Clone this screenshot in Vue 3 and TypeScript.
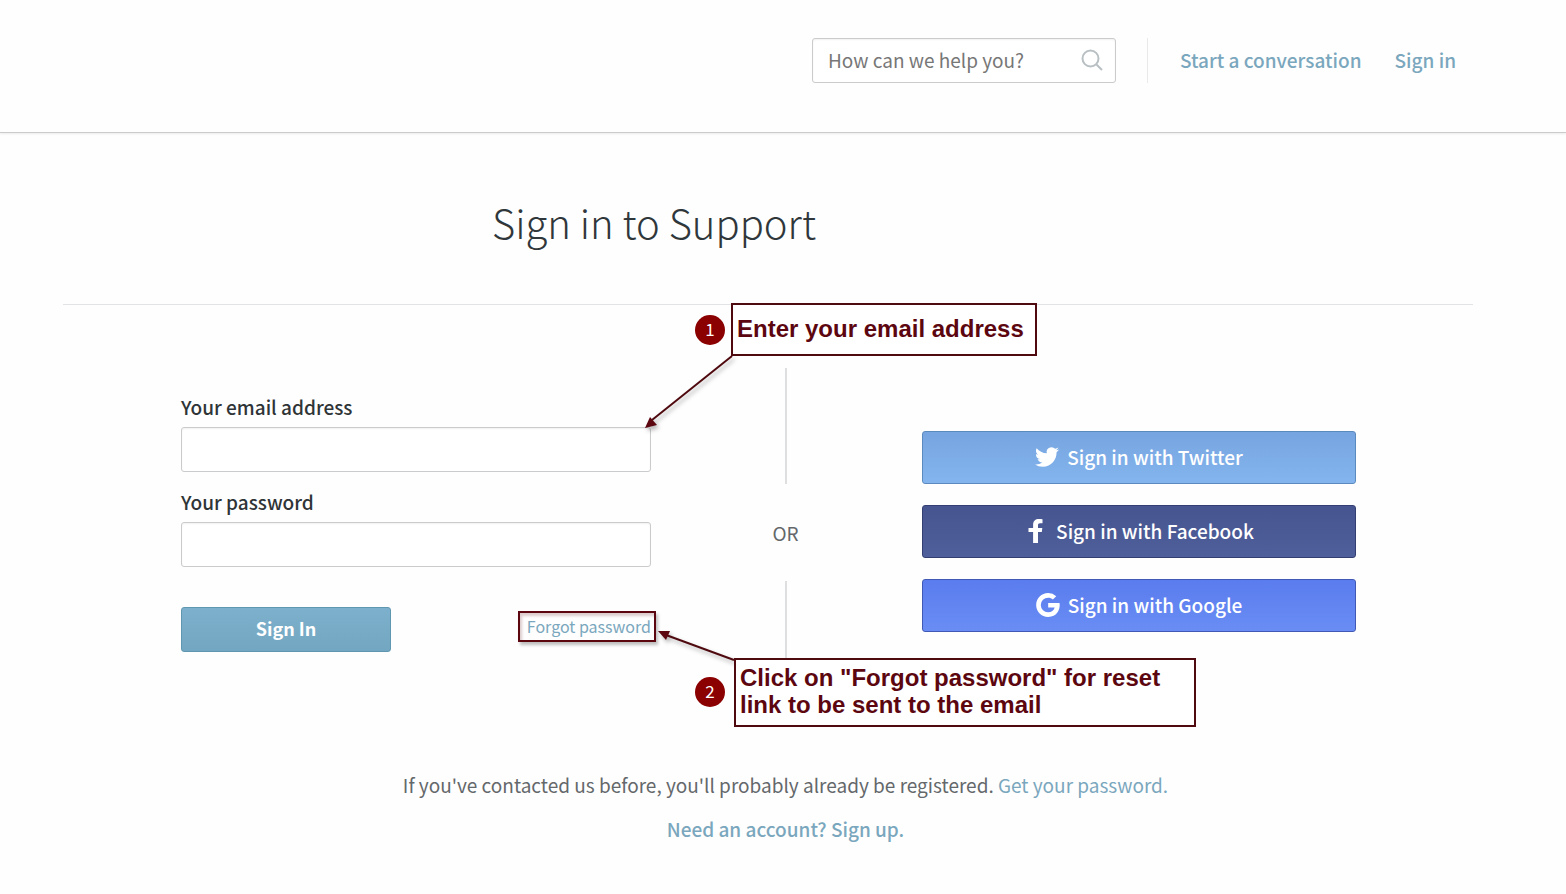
<script setup lang="ts">
import { ref } from 'vue'

interface Provider {
  id: string
  name: string
  viewBox: string
  path: string
}

const query = ref('')
const email = ref('')
const password = ref('')

const providers: Provider[] = [
  {
    id: 'twitter',
    name: 'Twitter',
    viewBox: '0 0 24 24',
    path: 'M23.953 4.57a10 10 0 01-2.825.775 4.958 4.958 0 002.163-2.723c-.951.555-2.005.959-3.127 1.184a4.92 4.92 0 00-8.384 4.482C7.69 8.095 4.067 6.13 1.64 3.162a4.822 4.822 0 00-.666 2.475c0 1.71.87 3.213 2.188 4.096a4.904 4.904 0 01-2.228-.616v.06a4.923 4.923 0 003.946 4.827 4.996 4.996 0 01-2.212.085 4.936 4.936 0 004.604 3.417 9.867 9.867 0 01-6.102 2.105c-.39 0-.779-.023-1.17-.067a13.995 13.995 0 007.557 2.209c9.053 0 13.998-7.496 13.998-13.985 0-.21 0-.42-.015-.63A9.935 9.935 0 0024 4.59z',
  },
  {
    id: 'facebook',
    name: 'Facebook',
    viewBox: '0 0 24 24',
    path: 'M18.5.2v4h-2.300c-1.800 0-2.200.9-2.200 2.100v2.600h4.300l-.5 4H14V24H9.100V12.900H4.500v-4h4.600V5.700C9.100 2 11.400 0 14.900 0c1.700 0 3.100.1 3.600.2z',
  },
  {
    id: 'google',
    name: 'Google',
    viewBox: '2.400 2 20 20',
    path: 'M12.545 10.239v3.821h5.445c-.712 2.315-2.647 3.972-5.445 3.972a6.033 6.033 0 1 1 0-12.064c1.498 0 2.866.549 3.921 1.453l2.814-2.814A9.969 9.969 0 0 0 12.545 2C7.021 2 2.543 6.477 2.543 12s4.478 10 10.002 10c8.396 0 10.249-7.85 9.426-11.748l-9.426-.013z',
  },
]
</script>

<template>
  <div class="page">
    <header class="topbar">
      <form class="search" role="search" @submit.prevent>
        <input v-model="query" type="text" placeholder="How can we help you?" aria-label="Search" />
        <button type="submit" aria-label="Submit search">
          <svg viewBox="0 0 22 22" width="22" height="22" fill="none" stroke="#b9c0c3" stroke-width="2">
            <circle cx="9.500" cy="9.500" r="8" />
            <path d="M15.200 15.200L21 21" />
          </svg>
        </button>
      </form>
      <nav class="links">
        <a href="#conversation">Start a conversation</a>
        <a href="#signin">Sign in</a>
      </nav>
    </header>

    <main>
      <h1>Sign in to Support</h1>
      <section class="panel">
        <form class="login" @submit.prevent>
          <label for="email">Your email address</label>
          <input id="email" v-model="email" type="email" />
          <label for="password">Your password</label>
          <input id="password" v-model="password" type="password" />
          <div class="actions">
            <button type="submit">Sign In</button>
            <a href="#forgot">Forgot password</a>
          </div>
        </form>
        <div class="divider"><span>OR</span></div>
        <div class="social">
          <button v-for="p in providers" :key="p.id" type="button" :class="p.id">
            <svg :viewBox="p.viewBox" width="24" height="24" fill="currentColor" aria-hidden="true">
              <path :d="p.path" />
            </svg>
            <span>Sign in with {{ p.name }}</span>
          </button>
        </div>
      </section>
    </main>

    <footer>
      <p>If you've contacted us before, you'll probably already be registered. <a href="#get">Get your password.</a></p>
      <p><a class="strong" href="#signup">Need an account? Sign up.</a></p>
    </footer>

    <svg class="arrow first-arrow" width="100" height="90" viewBox="0 0 100 90" aria-hidden="true">
      <path d="M92 6L12 70" stroke="#4f0a10" stroke-width="2" />
      <path d="M5 78L10 67L17 75Z" fill="#5c0610" />
    </svg>
    <svg class="arrow second-arrow" width="90" height="40" viewBox="0 0 90 40" aria-hidden="true">
      <path d="M82 35L14 10" stroke="#4f0a10" stroke-width="2" />
      <path d="M6 6L18 6L14 15Z" fill="#5c0610" />
    </svg>
    <span class="badge one">1</span>
    <span class="badge two">2</span>
    <div class="callout first">Enter your email address</div>
    <div class="callout last">Click on "Forgot password" for reset link to be sent to the email</div>
    <div class="highlight"></div>
  </div>
</template>

<style>
body {
  margin: 0;
  background: #fefefe;
}
</style>

<style scoped>
.page,
.page * {
  box-sizing: border-box;
}
.page {
  position: relative;
  font-family: "Noto Sans CJK SC", "Open Sans", sans-serif;
  font-size: 19px;
  line-height: 24px;
  color: #64686b;
}
a {
  color: #7aa7bd;
  text-decoration: none;
}
input,
button {
  font: inherit;
}
input {
  height: 45px;
  border: 1px solid #c9cbcd;
  border-radius: 3px;
  background: #fff;
  box-shadow: inset 0 1px 2px rgba(0, 0, 0, 0.06);
  outline: none;
}
.topbar {
  display: flex;
  justify-content: flex-end;
  align-items: flex-start;
  height: 133px;
  padding: 38px 110px 0 0;
  border-bottom: 1px solid #c9cbcd;
  box-shadow: 0 1px 2px rgba(0, 0, 0, 0.08);
}
.search {
  display: flex;
  position: relative;
}
.search input {
  width: 304px;
  padding: 0 48px 2px 15px;
  color: #64686b;
}
.search input::placeholder {
  color: #777;
  opacity: 1;
}
.search button {
  position: absolute;
  top: 11px;
  right: 13px;
  display: flex;
  padding: 0;
  border: 0;
  background: none;
}
.links {
  display: flex;
  align-items: center;
  gap: 33px;
  height: 45px;
  margin-left: 31px;
  padding: 0 0 2px 32px;
  border-left: 1px solid #e8eaeb;
  font-weight: 500;
}
main {
  padding: 0 93px 0 63px;
}
h1 {
  margin: 0;
  padding: 60px 228px 52px 0;
  border-bottom: 1px solid #e2e3e4;
  text-align: center;
  font-size: 40px;
  line-height: 59px;
  font-weight: 300;
  color: #30373b;
}
.panel {
  display: grid;
  grid-template-columns: 470fr 271fr 434fr;
  padding: 63px 117px 0 118px;
}
.login {
  display: flex;
  flex-direction: column;
  padding-top: 27px;
}
.login label {
  margin-bottom: 8px;
  font-weight: 500;
  color: #2f3437;
}
.login input {
  width: 100%;
  margin-bottom: 18px;
  padding: 0 12px;
}
.actions {
  display: flex;
  justify-content: space-between;
  padding-top: 22px;
}
.actions button {
  width: 210px;
  height: 45px;
  padding: 0 0 3px;
  border: 1px solid #5f96b0;
  border-radius: 3px;
  background: linear-gradient(#7db0cc, #73a6c0);
  color: #fff;
  font-size: 18px;
  font-weight: 700;
}
.actions a {
  padding-top: 7px;
  font-size: 16px;
}
.divider {
  display: flex;
  flex-direction: column;
  align-items: center;
  justify-content: space-between;
  height: 329px;
  padding-right: 2px;
}
.divider::before,
.divider::after {
  content: "";
  width: 2px;
  height: 116px;
  background: #dddfe0;
}
.social {
  display: flex;
  flex-direction: column;
  gap: 21px;
  padding-top: 63px;
}
.social button {
  display: flex;
  align-items: center;
  justify-content: center;
  gap: 8px;
  height: 53px;
  padding: 0 0 2px;
  border: 1px solid;
  border-radius: 3px;
  color: #fff;
  font-weight: 500;
}
.social .twitter {
  border-color: #5b8abf;
  background: linear-gradient(#76a4e0, #84b5ee);
}
.social .facebook {
  border-color: #333f72;
  background: linear-gradient(#46558f, #4f5f9b);
}
.social .google {
  border-color: #4059b5;
  background: linear-gradient(#5a7cee, #698df4);
}
footer {
  display: flex;
  flex-direction: column;
  gap: 20px;
  padding: 76px 0 40px 5px;
  text-align: center;
}
footer p {
  margin: 0;
}
.strong {
  font-weight: 500;
}
.arrow {
  position: absolute;
  filter: drop-shadow(2px 3px 2px rgba(0, 0, 0, 0.3));
}
.first-arrow {
  left: 640px;
  top: 350px;
}
.second-arrow {
  left: 652px;
  top: 625px;
}
.badge {
  position: absolute;
  left: 695px;
  width: 30px;
  height: 30px;
  border-radius: 50%;
  background: #8b0000;
  color: #fff;
  text-align: center;
  font-size: 17px;
  line-height: 27px;
}
.one {
  top: 315px;
}
.two {
  top: 677px;
}
.callout {
  position: absolute;
  border: 2px solid #4f0a10;
  background: #fff;
  color: #5c0610;
  font: bold 24px/27px "Liberation Sans", Arial, sans-serif;
}
.first {
  left: 731px;
  top: 303px;
  width: 306px;
  height: 53px;
  padding: 10px 4px;
}
.last {
  left: 734px;
  top: 658px;
  width: 462px;
  height: 69px;
  padding: 4px;
}
.highlight {
  position: absolute;
  left: 518px;
  top: 611px;
  width: 138px;
  height: 31px;
  border: 2px solid #5c0610;
  box-shadow: 2px 3px 3px rgba(0, 0, 0, 0.25), inset 2px 3px 3px rgba(92, 6, 16, 0.2);
  pointer-events: none;
}
</style>
